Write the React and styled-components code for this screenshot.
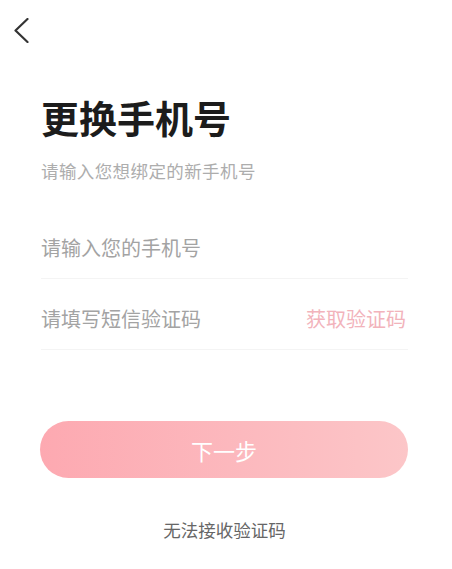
import React from "react";
import styled, { createGlobalStyle } from "styled-components";

const GlobalStyle = createGlobalStyle`
  html, body {
    margin: 0;
    padding: 0;
    background: #fff;
  }
  body {
    font-family: "Noto Sans CJK SC", "Noto Sans", sans-serif;
  }
`;

const Page = styled.div`
  width: 452px;
  min-height: 569px;
  box-sizing: border-box;
  padding: 18px 44px 0 41px;
  display: flex;
  flex-direction: column;
`;

const BackButton = styled.button`
  margin-left: -27px;
  width: 16px;
  height: 25px;
  padding: 0;
  border: none;
  background: none;
  display: flex;
  cursor: pointer;
`;

const Title = styled.h1`
  margin: 55px 0 0;
  font-size: 38px;
  line-height: 38px;
  font-weight: 700;
  color: #1c1c1c;
`;

const Subtitle = styled.p`
  margin: 26px 0 0;
  font-size: 17.5px;
  line-height: 18px;
  letter-spacing: 0.4px;
  color: #adadad;
`;

const Form = styled.div`
  margin-top: 28px;
  display: flex;
  flex-direction: column;
`;

const Field = styled.div`
  height: 71px;
  box-sizing: border-box;
  padding: 30px 0 21px;
  display: flex;
  align-items: center;
  justify-content: space-between;
  border-bottom: 1px solid #f4f4f4;
`;

const Input = styled.input`
  flex: 1;
  border: none;
  outline: none;
  padding: 0;
  font-family: inherit;
  font-size: 20px;
  line-height: 20px;
  color: #333;
  background: transparent;
  &::placeholder {
    color: #a3a3a3;
  }
`;

const CodeLink = styled.span`
  margin-right: 2px;
  font-size: 20px;
  line-height: 20px;
  color: #f2b3bb;
`;

const NextButton = styled.button`
  margin: 71px 0 0 -1px;
  height: 57px;
  border: none;
  border-radius: 29px;
  background: linear-gradient(90deg, #fda9b1 0%, #fcb9be 55%, #fcc6c8 100%);
  color: #fff;
  font-family: inherit;
  font-size: 22px;
  cursor: pointer;
`;

const HelpLink = styled.div`
  margin-top: 43px;
  text-align: center;
  font-size: 17.5px;
  line-height: 18px;
  color: #666;
`;

export default function App() {
  return (
    <>
      <GlobalStyle />
      <Page>
        <BackButton aria-label="返回">
          <svg width="16" height="25" viewBox="0 0 16 25" fill="none">
            <polyline
              points="13.5,1 1.5,12.5 13.5,24"
              stroke="#333"
              strokeWidth="2.2"
              strokeLinecap="round"
              strokeLinejoin="round"
            />
          </svg>
        </BackButton>
        <Title>更换手机号</Title>
        <Subtitle>请输入您想绑定的新手机号</Subtitle>
        <Form>
          <Field>
            <Input placeholder="请输入您的手机号" />
          </Field>
          <Field>
            <Input placeholder="请填写短信验证码" />
            <CodeLink>获取验证码</CodeLink>
          </Field>
        </Form>
        <NextButton>下一步</NextButton>
        <HelpLink>无法接收验证码</HelpLink>
      </Page>
    </>
  );
}
